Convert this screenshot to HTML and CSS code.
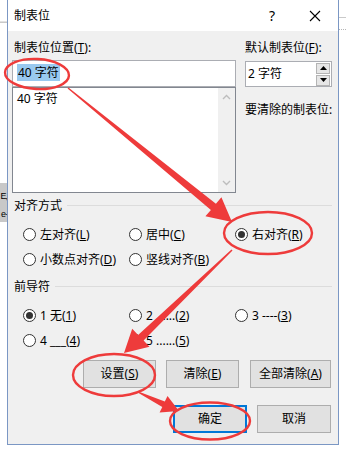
FILE: index.html
```html
<!DOCTYPE html>
<html lang="zh-CN">
<head>
    <meta charset="UTF-8">
    <title>制表位</title>
    <link rel="stylesheet" href="styles.css">
</head>
<body>

    <div class="page">
        <!-- 对话框后面露出的文档边缘 -->
        <div class="edge edge-left">
            <div class="edge-rule"></div>
            <div class="edge-snippet">
                <span>E,</span>
                <span>e·</span>
            </div>
        </div>

        <div class="dialog">
            <div class="titlebar">
                <span class="title">制表位</span>
                <span class="tb-btn tb-help">?</span>
                <span class="tb-btn tb-close">
                    <svg width="12" height="12" viewBox="0 0 12 12">
                        <path d="M1 1 L11 11 M11 1 L1 11" stroke="#000" stroke-width="1.1" fill="none"/>
                    </svg>
                </span>
            </div>

            <div class="body">
                <div class="top">
                    <div class="col-left">
                        <div class="label">制表位位置(<u>T</u>):</div>
                        <div class="textbox"><span class="selected">40 字符</span></div>
                        <div class="listbox">
                            <div class="list-items">
                                <div class="list-item">40 字符</div>
                            </div>
                            <div class="scrollbar">
                                <svg width="9" height="6" viewBox="0 0 9 6"><path d="M1 5 L4.5 1.5 L8 5" stroke="#bdbdbd" stroke-width="1.4" fill="none"/></svg>
                                <svg width="9" height="6" viewBox="0 0 9 6"><path d="M1 1 L4.5 4.5 L8 1" stroke="#bdbdbd" stroke-width="1.4" fill="none"/></svg>
                            </div>
                        </div>
                    </div>
                    <div class="col-right">
                        <div class="label label-flush">默认制表位(<u>F</u>):</div>
                        <div class="spinbox">
                            <span class="spin-value">2 字符</span>
                            <div class="spin-btns">
                                <div class="spin-btn"><svg width="7" height="4" viewBox="0 0 7 4"><path d="M0 4 L3.5 0 L7 4 Z" fill="#000"/></svg></div>
                                <div class="spin-btn"><svg width="7" height="4" viewBox="0 0 7 4"><path d="M0 0 L3.5 4 L7 0 Z" fill="#000"/></svg></div>
                            </div>
                        </div>
                        <div class="label label-flush clear-label">要清除的制表位:</div>
                    </div>
                </div>

                <div class="group-head"><span>对齐方式</span><i></i></div>
                <div class="radio-grid">
                    <label class="radio"><span class="dot"></span><span>左对齐(<u>L</u>)</span></label>
                    <label class="radio"><span class="dot"></span><span>居中(<u>C</u>)</span></label>
                    <label class="radio"><span class="dot on"></span><span>右对齐(<u>R</u>)</span></label>
                    <label class="radio"><span class="dot"></span><span>小数点对齐(<u>D</u>)</span></label>
                    <label class="radio"><span class="dot"></span><span>竖线对齐(<u>B</u>)</span></label>
                </div>

                <div class="group-head group-leader"><span>前导符</span><i></i></div>
                <div class="radio-grid">
                    <label class="radio"><span class="dot on"></span><span>1 无(<u>1</u>)</span></label>
                    <label class="radio"><span class="dot"></span><span>2 ......(<u>2</u>)</span></label>
                    <label class="radio"><span class="dot"></span><span>3 ----(<u>3</u>)</span></label>
                    <label class="radio"><span class="dot"></span><span>4 ___(<u>4</u>)</span></label>
                    <label class="radio"><span class="dot"></span><span>5 ......(<u>5</u>)</span></label>
                </div>

                <div class="btn-row">
                    <div class="btn"><span>设置(<u>S</u>)</span></div>
                    <div class="btn"><span>清除(<u>E</u>)</span></div>
                    <div class="btn btn-wide"><span>全部清除(<u>A</u>)</span></div>
                </div>
                <div class="btn-row btn-row-ok">
                    <div class="btn btn-default">确定</div>
                    <div class="btn btn-cancel">取消</div>
                </div>
            </div>
        </div>

        <div class="edge edge-right">
            <div class="edge-rule"></div>
            <div class="edge-rule edge-rule-2"></div>
        </div>
    </div>

    <!-- 红色标注：圈和箭头 -->
    <svg class="marks" width="346" height="453" viewBox="0 0 346 453">
        <g fill="none" stroke="#ee3b3b" stroke-width="2.4">
            <ellipse cx="37" cy="74" rx="32" ry="15" transform="rotate(3 37 74)"/>
            <ellipse cx="268" cy="233" rx="44" ry="21"/>
            <ellipse cx="114" cy="375" rx="41" ry="21"/>
            <ellipse cx="210" cy="421" rx="40" ry="18.5"/>
        </g>
        <g fill="#ee3b3b">
            <polygon points="67.6,88.5 210.9,209.9 205.4,216.3 232,222 221.4,197.3 215.9,203.7 68.4,87.5"/>
            <polygon points="231.5,249.5 138.1,334.9 132.2,328.8 124,353 149.5,346.7 143.6,340.6 232.5,250.5"/>
            <polygon points="137.7,392.6 162.3,406.9 159.6,412.4 179,411 167.5,395.9 164.8,401.4 138.3,391.4"/>
        </g>
    </svg>

</body>
</html>
```

FILE: styles.css
```css
:root {
    --face: #f0f0f0;
    --frame: #7b97c4;
    --field-border: #abadb3;
    --list-border: #828790;
    --btn-bg: #e1e1e1;
    --btn-border: #adadad;
    --accent: #0078d7;
    --group-line: #dcdcdc;
}

* {
    box-sizing: border-box;
}

body {
    margin: 0;
    background: #fff;
    font-family: "Noto Sans", "Noto Sans CJK SC", sans-serif;
    font-size: 12px;
    line-height: 16px;
    color: #000;
}

u {
    text-decoration: underline;
    text-underline-offset: 1px;
}

.page {
    display: flex;
    width: 346px;
    height: 453px;
    overflow: hidden;
}

/* 两侧露出来的文档 */
.edge {
    width: 7px;
    flex: none;
}

.edge-rule {
    height: 18px;
    border-bottom: 1px solid #c9c9c9;
}

.edge-left .edge-rule {
    height: 23px;
    box-shadow: inset 0 -6px 0 -5px #e2e2e2;
}

.edge-right .edge-rule-2 {
    height: 12px;
    border-bottom: 1px dotted #b5b5b5;
}

.edge-snippet {
    margin-top: 160px;
    height: 39px;
    background: #c8c8c8;
    display: flex;
    flex-direction: column;
    align-items: flex-end;
    padding-top: 4px;
    font-family: "Liberation Sans", sans-serif;
    font-size: 9px;
    letter-spacing: -1px;
    line-height: 18px;
    white-space: nowrap;
}

/* 对话框 */
.dialog {
    width: 332px;
    height: 445px;
    flex: none;
    border: 1px solid var(--frame);
    border-top: none;
    background: var(--face);
}

.titlebar {
    height: 31px;
    background: #fff;
    display: flex;
    align-items: center;
    padding-left: 6px;
}

.title {
    flex: 1;
}

.tb-btn {
    width: 46px;
    height: 31px;
    display: flex;
    align-items: center;
    justify-content: center;
}

.tb-help {
    font-size: 14px;
    padding-left: 6px;
}

.body {
    padding: 9px 6px 0 4px;
}

.top {
    display: grid;
    grid-template-columns: 224px 87px;
    column-gap: 9px;
}

.label {
    padding-left: 2px;
    height: 16px;
    white-space: nowrap;
}

.label-flush {
    padding-left: 0;
}

.textbox {
    margin-top: 4px;
    height: 27px;
    background: #fff;
    border: 1px solid var(--field-border);
    padding: 4px 0 0 4px;
}

.selected {
    background: #99c9ef;
    padding: 0 1px;
}

.listbox {
    height: 106px;
    background: #fff;
    border: 1px solid var(--list-border);
    display: flex;
}

.list-items {
    flex: 1;
    padding: 3px 0 0 4px;
}

.scrollbar {
    width: 17px;
    background: var(--face);
    display: flex;
    flex-direction: column;
    justify-content: space-between;
    align-items: center;
    padding: 6px 0 6px;
}

.spinbox {
    margin-top: 5px;
    height: 26px;
    background: #fff;
    border: 1px solid var(--field-border);
    display: flex;
    align-items: center;
    padding-left: 2px;
}

.spin-value {
    flex: 1;
}

.spin-btns {
    display: flex;
    flex-direction: column;
    gap: 1px;
    margin-right: 1px;
}

.spin-btn {
    width: 14px;
    height: 11px;
    background: #e6e6e6;
    border: 1px solid #b4b4b4;
    display: flex;
    align-items: center;
    justify-content: center;
}

.clear-label {
    margin-top: 15px;
}

/* 分组 */
.group-head {
    display: flex;
    align-items: center;
    gap: 5px;
    margin-top: 5px;
    padding-left: 2px;
    height: 16px;
}

.group-head i {
    flex: 1;
    height: 1px;
    background: var(--group-line);
    margin-top: -1px;
}

.group-leader {
    margin-top: 7px;
}

.radio-grid {
    display: grid;
    grid-template-columns: 106px 106px auto;
    grid-auto-rows: 25px;
    padding-left: 11px;
    margin-top: 8px;
}

.radio {
    display: flex;
    align-items: center;
    gap: 4px;
    white-space: nowrap;
}

.dot {
    width: 13px;
    height: 13px;
    border: 1px solid #333;
    border-radius: 50%;
    background: #fff;
    display: flex;
    align-items: center;
    justify-content: center;
    flex: none;
}

.dot.on::after {
    content: "";
    width: 7px;
    height: 7px;
    border-radius: 50%;
    background: #333;
}

/* 按钮 */
.btn-row {
    display: flex;
    justify-content: flex-end;
    gap: 10px;
    margin-top: 7px;
    padding-right: 1px;
}

.btn {
    width: 73px;
    height: 28px;
    background: var(--btn-bg);
    border: 1px solid var(--btn-border);
    display: flex;
    align-items: center;
    justify-content: center;
    white-space: nowrap;
}

.btn-wide {
    width: 81px;
    margin-left: 1px;
}

.btn-row-ok {
    margin-top: 17px;
}

.btn-default {
    width: 74px;
    border: 2px solid var(--accent);
}

.btn-cancel {
    width: 74px;
}

.marks {
    position: absolute;
    left: 0;
    top: 0;
    pointer-events: none;
}
```
